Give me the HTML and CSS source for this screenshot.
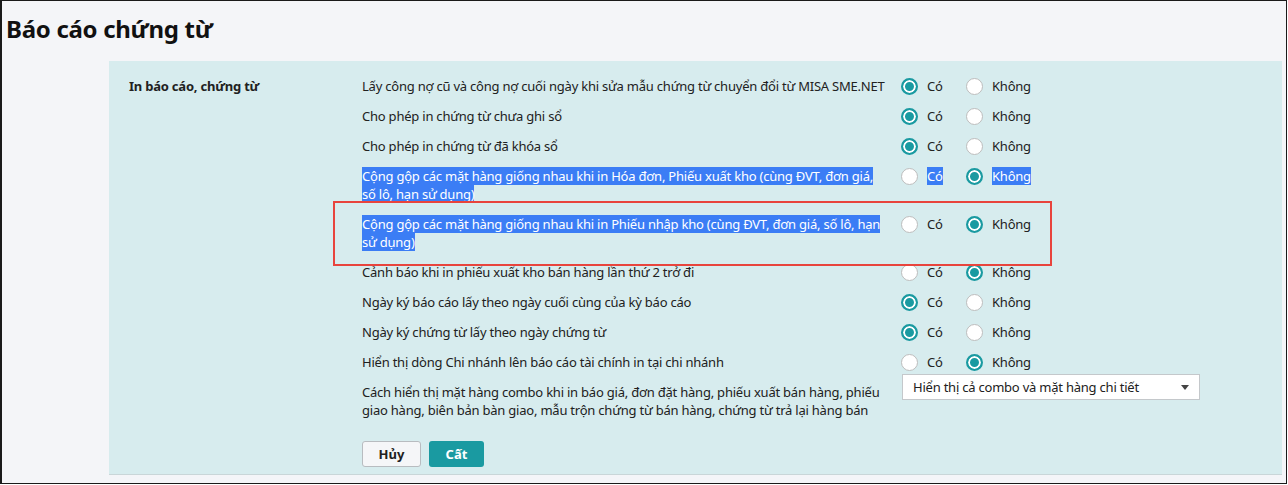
FILE: index.html
```html
<!DOCTYPE html>
<html lang="vi">
<head>
  <meta charset="UTF-8">
  <meta name="viewport" content="width=device-width, initial-scale=1.0">
  <title>Báo cáo chứng từ</title>
  <link rel="stylesheet" href="styles.css">
</head>
<body>

  <div class="screen">
    <h1 class="page-title">Báo cáo chứng từ</h1>

    <div class="panel">
      <div class="group-label">In báo cáo, chứng từ</div>

      <div class="options">
        <div class="row">
          <div class="row-text">Lấy công nợ cũ và công nợ cuối ngày khi sửa mẫu chứng từ chuyển đổi từ MISA SME.NET</div>
          <div class="choices">
            <label class="choice"><span class="radio checked"></span><span>Có</span></label>
            <label class="choice"><span class="radio"></span><span>Không</span></label>
          </div>
        </div>

        <div class="row">
          <div class="row-text">Cho phép in chứng từ chưa ghi sổ</div>
          <div class="choices">
            <label class="choice"><span class="radio checked"></span><span>Có</span></label>
            <label class="choice"><span class="radio"></span><span>Không</span></label>
          </div>
        </div>

        <div class="row">
          <div class="row-text">Cho phép in chứng từ đã khóa sổ</div>
          <div class="choices">
            <label class="choice"><span class="radio checked"></span><span>Có</span></label>
            <label class="choice"><span class="radio"></span><span>Không</span></label>
          </div>
        </div>

        <div class="row">
          <div class="row-text"><span class="sel">Cộng gộp các mặt hàng giống nhau khi in Hóa đơn, Phiếu xuất kho (cùng ĐVT, đơn giá, số lô, hạn sử dụng)</span></div>
          <div class="choices">
            <label class="choice"><span class="radio"></span><span class="sel">Có</span></label>
            <label class="choice"><span class="radio checked"></span><span class="sel">Không</span></label>
          </div>
        </div>

        <!-- row marked with the red box -->
        <div class="row marked">
          <div class="row-text"><span class="sel">Cộng gộp các mặt hàng giống nhau khi in Phiếu nhập kho (cùng ĐVT, đơn giá, số lô, hạn sử dụng)</span></div>
          <div class="choices">
            <label class="choice"><span class="radio"></span><span>Có</span></label>
            <label class="choice"><span class="radio checked"></span><span>Không</span></label>
          </div>
        </div>

        <div class="row">
          <div class="row-text">Cảnh báo khi in phiếu xuất kho bán hàng lần thứ 2 trở đi</div>
          <div class="choices">
            <label class="choice"><span class="radio"></span><span>Có</span></label>
            <label class="choice"><span class="radio checked"></span><span>Không</span></label>
          </div>
        </div>

        <div class="row">
          <div class="row-text">Ngày ký báo cáo lấy theo ngày cuối cùng của kỳ báo cáo</div>
          <div class="choices">
            <label class="choice"><span class="radio checked"></span><span>Có</span></label>
            <label class="choice"><span class="radio"></span><span>Không</span></label>
          </div>
        </div>

        <div class="row">
          <div class="row-text">Ngày ký chứng từ lấy theo ngày chứng từ</div>
          <div class="choices">
            <label class="choice"><span class="radio checked"></span><span>Có</span></label>
            <label class="choice"><span class="radio"></span><span>Không</span></label>
          </div>
        </div>

        <div class="row">
          <div class="row-text">Hiển thị dòng Chi nhánh lên báo cáo tài chính in tại chi nhánh</div>
          <div class="choices">
            <label class="choice"><span class="radio"></span><span>Có</span></label>
            <label class="choice"><span class="radio checked"></span><span>Không</span></label>
          </div>
        </div>

        <div class="row">
          <div class="row-text">Cách hiển thị mặt hàng combo khi in báo giá, đơn đặt hàng, phiếu xuất bán hàng, phiếu giao hàng, biên bản bàn giao, mẫu trộn chứng từ bán hàng, chứng từ trả lại hàng bán</div>
          <div class="select">
            <span>Hiển thị cả combo và mặt hàng chi tiết</span>
            <span class="caret"></span>
          </div>
        </div>

        <div class="actions">
          <button class="btn btn-cancel">Hủy</button>
          <button class="btn btn-save">Cất</button>
        </div>
      </div>
    </div>
  </div>

</body>
</html>
```

FILE: styles.css
```css
* {
  box-sizing: border-box;
}

body {
  margin: 0;
  font-family: 'Noto Sans', sans-serif;
  font-size: 13px;
  letter-spacing: -0.22px;
  color: #212121;
  background: #fff;
}

.screen {
  width: 1287px;
  height: 484px;
  border: 1px solid #1a1a1a;
  border-width: 1px 1px 1px 2px;
  background: #f4f5f8;
  overflow: hidden;
}

.page-title {
  margin: 0;
  padding: 12px 0 0 4px;
  height: 60px;
  font-size: 24px;
  font-weight: 700;
  line-height: 32px;
  letter-spacing: -0.3px;
  color: #111;
}

/* Settings panel */
.panel {
  display: grid;
  grid-template-columns: 233px 1fr;
  margin: 0 4px 0 107px;
  padding: 16px 0 7px 20px;
  background: #d7ecee;
  border-bottom: 1px solid #c9d6d8;
}

.group-label {
  font-weight: 700;
  line-height: 18px;
}

.options {
  display: flex;
  flex-direction: column;
  gap: 12px;
}

.row {
  display: flex;
  align-items: flex-start;
  line-height: 18px;
}

.row-text {
  width: 524px;
  margin-right: 15px;
}

.sel {
  background: #3b7df5;
  color: #fff;
}

.marked {
  position: relative;
}

.marked::after {
  content: "";
  position: absolute;
  left: -29px;
  top: -14px;
  width: 715px;
  height: 61px;
  border: 2px solid #e8443d;
  pointer-events: none;
}

/* Radios */
.choices {
  display: flex;
}

.choice {
  display: flex;
  align-items: center;
  width: 65px;
}

.radio {
  width: 17px;
  height: 17px;
  margin-right: 9px;
  border-radius: 50%;
  background: #fff;
  border: 1px solid #bdbdbd;
  flex-shrink: 0;
}

.radio.checked {
  border: 2px solid #1a9aa1;
  box-shadow: inset 0 0 0 2px #fff;
  background: #1a9aa1;
}

/* Dropdown */
.select {
  display: flex;
  align-items: center;
  justify-content: space-between;
  width: 298px;
  height: 26px;
  margin-top: -9px;
  margin-left: 1px;
  padding: 0 10px 0 10px;
  background: #fff;
  border: 1px solid #c4c8cb;
  font-size: 13px;
}

.caret {
  width: 0;
  height: 0;
  border-left: 4px solid transparent;
  border-right: 4px solid transparent;
  border-top: 5px solid #444;
}

/* Buttons */
.actions {
  display: flex;
  gap: 8px;
  margin-top: 10px;
}

.btn {
  height: 26px;
  padding: 0;
  font-family: 'Noto Sans', sans-serif;
  font-size: 13px;
  font-weight: 700;
  border-radius: 3px;
  cursor: pointer;
}

.btn-cancel {
  width: 59px;
  background: #f5f6f8;
  color: #212121;
  border: 1px solid #b8bcc0;
}

.btn-save {
  width: 55px;
  background: #1a9aa1;
  color: #fff;
  border: none;
}
```
